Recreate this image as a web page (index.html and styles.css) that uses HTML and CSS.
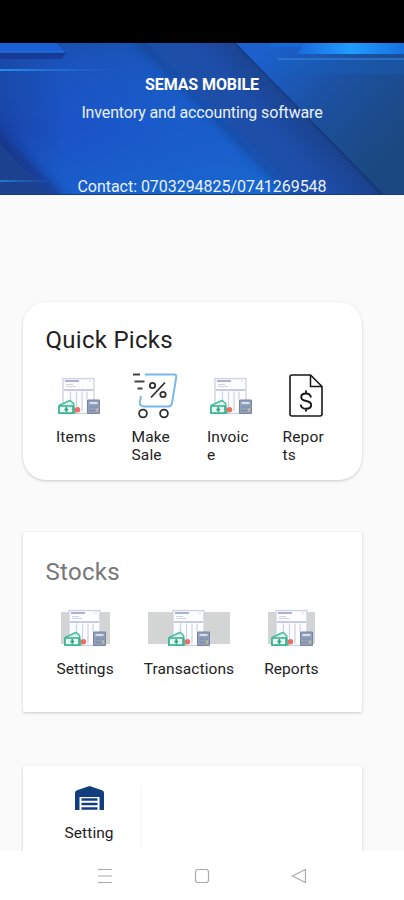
FILE: index.html
```
<!DOCTYPE html>
<html lang="en">
<head>
<meta charset="utf-8">
<title>Semas Mobile</title>
<link rel="stylesheet" href="styles.css">
</head>
<body>
<svg class="defs" aria-hidden="true">
  <symbol id="invoice" viewBox="0 0 42 37">
    <path d="M5 1h31v35H5z" fill="#fdfdff" stroke="#ccd2e1" stroke-width="1.3"/>
    <path d="M7 3.500h14" stroke="#a9b5d0" stroke-width="1.8"/>
    <path d="M31 3.500h2M8 7h7M8 9h10" stroke="#ccd3e3"/>
    <path d="M6 12.500h29" stroke="#b3bdd3" stroke-width="1.600"/>
    <path d="M12.500 14v10M18.500 14v16M24 14v20M29 14v8" stroke="#d0d6e4" stroke-width="1.3"/>
    <path d="M2 27.500l10-4.500 3.500 3 1.500 9.500H1z" fill="#dff5ee" stroke="#4dbb9c" stroke-width="1.500"/>
    <path d="M1 28.500h14v7H1z" fill="#e9faf5" stroke="#35b08f" stroke-width="1.700"/>
    <path d="M8.300 29.500v5M6.300 32h4" stroke="#29a582" stroke-width="1.700"/>
    <circle cx="19.500" cy="32.300" r="2.700" fill="#f36b5e"/>
    <path d="M29.500 22.500h12v13.500h-12z" fill="#929fb9" stroke="#7785a4"/>
    <path d="M31.500 25.500h8" stroke="#d5deec" stroke-width="2"/>
    <path d="M31.500 29.500h8M31.500 33h5" stroke="#75839f" stroke-dasharray="2 1"/>
    <path d="M38 31h2v3h-2z" fill="#c7bd83"/>
  </symbol>
</svg>

<div class="status"></div>
<header class="hero">
  <svg class="hero-art" viewBox="0 0 404 152" preserveAspectRatio="none" aria-hidden="true">
    <defs>
      <linearGradient id="base" x1="0" y1="0" x2="1" y2="0">
        <stop offset="0" stop-color="#193fa0"/><stop offset=".16" stop-color="#1b50c5"/>
        <stop offset=".45" stop-color="#1a5bca"/><stop offset="1" stop-color="#1b63cb"/>
      </linearGradient>
      <linearGradient id="glow" x1="0" y1="0" x2="0" y2="1">
        <stop offset="0" stop-color="#1a50a8" stop-opacity=".6"/><stop offset=".55" stop-color="#1966d0" stop-opacity=".1"/>
        <stop offset="1" stop-color="#1975d4" stop-opacity=".4"/>
      </linearGradient>
      <linearGradient id="band" gradientUnits="userSpaceOnUse" x1="190" y1="85" x2="275" y2="10">
        <stop offset="0" stop-color="#1c51a9"/><stop offset=".55" stop-color="#1d4da8"/><stop offset=".83" stop-color="#1b438f"/><stop offset="1" stop-color="#122e6b"/>
      </linearGradient>
      <linearGradient id="right" gradientUnits="userSpaceOnUse" x1="270" y1="0" x2="390" y2="110">
        <stop offset="0" stop-color="#1b60cd"/><stop offset=".5" stop-color="#1c509f"/><stop offset="1" stop-color="#1b4880"/>
      </linearGradient>
      <linearGradient id="streak" x1="0" x2="1"><stop offset="0" stop-color="#258fef"/><stop offset="1" stop-color="#2b7ee2" stop-opacity="0"/></linearGradient>
      <linearGradient id="ray" x1="0" x2="1"><stop offset="0" stop-color="#1a69dc"/><stop offset=".5" stop-color="#209cff"/><stop offset="1" stop-color="#1671dd"/></linearGradient>
      <filter id="soft" x="-20%" y="-20%" width="140%" height="140%"><feGaussianBlur stdDeviation="5"/></filter>
      <filter id="fine"><feGaussianBlur stdDeviation=".6"/></filter>
    </defs>
    <path d="M0 0h404v152H0z" fill="url(#base)"/>
    <path d="M0 0h404v152H0z" fill="url(#glow)"/>
    <path d="M138 -5L302 159" stroke="#163c87" stroke-width="9" opacity=".65" filter="url(#soft)"/>
    <path d="M148 0h87l149 152h-84z" fill="url(#band)"/>
    <path d="M235 0h169v152h-21z" fill="url(#right)"/>
    <path d="M235 0l148 152" stroke="#102e69" stroke-width="1.500" opacity=".6" filter="url(#fine)"/>
    <path d="M-12 86L60 158" stroke="#13276f" stroke-width="14" opacity=".55" filter="url(#soft)"/>
    <path d="M0 101l49 51H0z" fill="#1b428f" filter="url(#fine)"/>
    <path d="M0 0h58l8 9-4 7H0z" fill="#183b98" filter="url(#fine)"/>
    <path d="M0 0h57l9 9H0z" fill="#1c5ed4"/>
    <path d="M0 9h64" stroke="#2580e6"/>
    <path d="M0 26h115v2H0z" fill="url(#streak)"/>
    <path d="M0 137h53v2H0z" fill="url(#streak)" opacity=".7"/>
    <path d="M270 0h134v4H270z" fill="#166ad7"/>
    <path d="M305 0h99v11H297z" fill="url(#ray)"/>
    <path d="M278 15h126v2H278z" fill="#3181d7" opacity=".65"/>
    <path d="M267 17h137v14H281z" fill="#1760bd" opacity=".35"/>
    <path d="M0 151.500h404" stroke="#153a91"/>
  </svg>
  <div class="hero-text">
    <h1>SEMAS MOBILE</h1>
    <p class="tagline">Inventory and accounting software</p>
    <p class="contact">Contact: 0703294825/0741269548</p>
  </div>
</header>

<main>
  <section class="card quick">
    <h2>Quick Picks</h2>
    <div class="quick-row">
      <div class="pick"><svg class="pic" viewBox="0 0 42 37"><use href="#invoice"/></svg><span class="label">Items</span></div>
      <div class="pick"><svg class="cart" viewBox="0 0 46 47" fill="none">
        <path d="M13 2.500h29c2 0 2.500 1 2.200 3L40 31c-.4 2.500-1.500 3.500-4 3.500H12c-3 0-4.500-1.500-4.200-4L9 24" stroke="#76b8ef" stroke-width="1.900"/>
        <path d="M1 2.500h7M2.500 9.500h10M5.500 16.500h5" stroke="#454545" stroke-width="1.800"/>
        <g stroke="#303030" stroke-width="1.800"><circle cx="20.500" cy="13.500" r="2.700"/><circle cx="31" cy="22.500" r="2.700"/><path d="M33 10.500L19 25.500"/><circle cx="11" cy="41.500" r="3.900"/><circle cx="32" cy="41.500" r="3.900"/></g>
      </svg><span class="label">Make Sale</span></div>
      <div class="pick"><svg class="pic" viewBox="0 0 42 37"><use href="#invoice"/></svg><span class="label">Invoic<br>e</span></div>
      <div class="pick"><svg class="report" viewBox="0 0 34 43" fill="none" stroke="#171717">
        <path d="M3 1h18.500L33 12.500V40q0 2-2 2H3q-2 0-2-2V3q0-2 2-2z" stroke-width="1.600"/>
        <path d="M21.500 1v11.500H33" stroke-width="1.500"/>
        <path d="M22 23.500c-.5-2.800-2.300-4-5-4-3 0-4.800 1.500-4.800 3.700 0 5.300 10 2.300 10 7.600 0 2.500-2 4-5.200 4-3 0-5-1.500-5.300-4.300M17 16.500v3M17 35v2.500" stroke-width="1.900"/>
      </svg><span class="label">Repor<br>ts</span></div>
    </div>
  </section>

  <section class="card stocks">
    <h2>Stocks</h2>
    <div class="stock-row">
      <div class="stock"><div class="plate plate-s"><svg class="pic" viewBox="0 0 42 37"><use href="#invoice"/></svg></div><span class="label">Settings</span></div>
      <div class="stock"><div class="plate plate-l"><svg class="pic" viewBox="0 0 42 37"><use href="#invoice"/></svg></div><span class="label">Transactions</span></div>
      <div class="stock"><div class="plate plate-r"><svg class="pic" viewBox="0 0 42 37"><use href="#invoice"/></svg></div><span class="label">Reports</span></div>
    </div>
  </section>

  <section class="card bottom">
    <div class="setting">
      <svg class="garage" viewBox="0 0 29 24"><path d="M0 24V7q0-2 2-2.700L14.500 0 27 4.300q2 .7 2 2.700v17h-4.500V11h-20v13z" fill="#123e80"/><path d="M6.500 13.500h16M6.500 18h16M6.500 22.500h16" stroke="#123e80" stroke-width="2.300"/></svg>
      <span class="label">Setting</span>
    </div>
    <div class="rule"></div>
  </section>
</main>

<nav>
  <svg viewBox="0 0 16 16"><path d="M1 1.500h14M1 8h14M1 14.500h14"/></svg>
  <svg viewBox="0 0 16 16"><rect x="1.500" y="1.500" width="13" height="13" rx="2.500"/></svg>
  <svg viewBox="0 0 16 16"><path d="M14.500 1.500v13L1.500 8z"/></svg>
</nav>
</body>
</html>
```
FILE: styles.css
```
* { box-sizing: border-box; }
body {
  margin: 0;
  width: 404px;
  height: 900px;
  overflow: hidden;
  display: flex;
  flex-direction: column;
  background: #fafafa;
  font-family: Roboto, sans-serif;
  color: #222;
}
h1, h2, p { margin: 0; font-weight: 400; }
svg { display: block; flex: none; }
.defs { position: absolute; width: 0; height: 0; }
.status { height: 43px; flex: none; background: #000; }

.hero { display: grid; height: 152px; flex: none; overflow: hidden; }
.hero-art { grid-area: 1 / 1; width: 404px; height: 152px; }
.hero-text {
  grid-area: 1 / 1;
  z-index: 1;
  display: flex;
  flex-direction: column;
  align-items: center;
  padding-top: 32px;
  color: #e9f1ff;
  font-size: 16px;
  line-height: 20px;
  white-space: nowrap;
}
h1 { font-size: 16px; font-weight: 700; color: #fff; letter-spacing: -.1px; }
.tagline { margin-top: 8px; letter-spacing: -.14px; }
.contact { margin-top: 54px; letter-spacing: -.04px; }

main { height: 656px; flex: none; padding: 107px 42px 0 23px; overflow: hidden; }
.card { background: #fff; box-shadow: 0 1px 3px rgba(0, 0, 0, .2); }
.card h2 { font-size: 24px; line-height: 28px; padding-left: 22.500px; letter-spacing: .28px; }
.label { font-size: 15.500px; line-height: 18px; letter-spacing: .08px; }

.quick { height: 178px; border-radius: 23px; padding-top: 24px; }
.quick-row { display: grid; grid-template-columns: repeat(4, 75.500px); padding: 18px 0 0 33px; }
.pick { display: flex; flex-direction: column; height: 92px; }
.pick .label { width: 46px; height: 36px; margin-top: auto; letter-spacing: .15px; }
.pick .pic { margin: 5px 0 0 2px; }
.pick:nth-child(3) .pic { margin-left: 3px; }
.pic { width: 42px; height: 38px; }
.cart { width: 46px; height: 47px; }
.report { width: 34px; height: 43px; margin: 2px 0 0 6px; }

.stocks { height: 180px; margin-top: 52px; padding-top: 26px; border-radius: 2px; }
.stocks h2 { color: #777; }
.stock-row { display: flex; padding: 23px 0 0 33.500px; gap: 30px; }
.stock { display: flex; flex-direction: column; align-items: center; gap: 13px; }
.plate { height: 38px; display: flex; justify-content: center; background: linear-gradient(#d3d5d4, #d3d5d4) center 3px / 100% 32px no-repeat; }
.plate-s { width: 49px; }
.plate-r { width: 47px; margin-left: 1px; }
.plate-l { width: 82px; }

.bottom { height: 140px; margin-top: 54px; padding: 20px 0 0 41.500px; display: flex; }
.setting { display: flex; flex-direction: column; align-items: center; gap: 14px; }
.garage { width: 29px; height: 24px; }
.rule { width: 1px; height: 63px; background: #f5f5f5; margin-left: 27px; }

nav { height: 49px; flex: none; background: #fff; display: flex; justify-content: center; gap: 81px; padding-top: 17px; }
nav svg { width: 16px; height: 16px; fill: none; stroke: #aaa; stroke-width: 1.200; }
```
